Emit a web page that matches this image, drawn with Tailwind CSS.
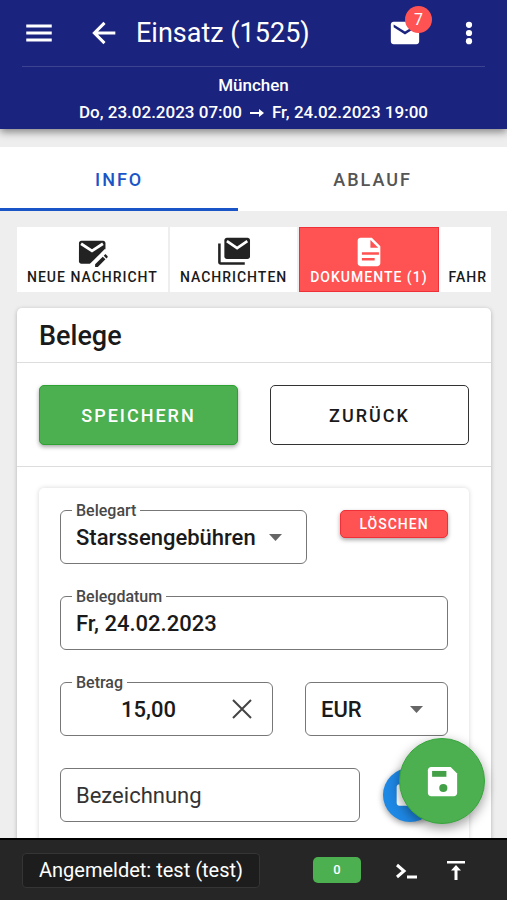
<!DOCTYPE html>
<html lang="de">
<head>
<meta charset="utf-8">
<meta name="viewport" content="width=device-width, initial-scale=1">
<title>Einsatz (1525)</title>
<script src="https://cdn.jsdelivr.net/npm/@tailwindcss/browser@4"></script>
</head>
<body class="bg-[#eeeeee]">
<div class="flex h-screen flex-col overflow-hidden font-[Roboto,sans-serif] text-[#1a1a1a]">

  <header class="relative z-10 bg-[#1a237e] px-[22px] pb-[3px] text-white shadow-[0_3px_8px_rgba(0,0,0,0.45)]">
    <div class="flex h-[67px] items-center border-b border-white/15">
      <button aria-label="Menü" class="size-[34px]"><svg viewBox="0 0 24 24" fill="currentColor"><path d="M3 18h18v-2.200H3V18zm0-4.900h18v-2.200H3v2.200zM3 6v2.200h18V6H3z"/></svg></button>
      <button aria-label="Zurück" class="ml-[31px] size-[34px]"><svg viewBox="0 0 24 24" fill="currentColor"><path d="M20 10.900H7.830l5.300-5.300L11.600 4.100l-7.900 7.900 7.900 7.900 1.500-1.500-5.300-5.300H20z"/></svg></button>
      <h1 class="ml-[15px] flex-1 text-[27px] leading-8">Einsatz (1525)</h1>
      <button aria-label="Nachrichten" class="relative size-[34px]">
        <svg viewBox="0 0 24 24" fill="currentColor"><path d="M20 4H4c-1.100 0-1.990.9-1.990 2L2 18c0 1.100.9 2 2 2h16c1.100 0 2-.9 2-2V6c0-1.100-.9-2-2-2zm0 4l-8 5-8-5V6l8 5 8-5v2z"/></svg>
        <span class="absolute -top-[10px] left-[17px] flex size-[27px] items-center justify-center rounded-full bg-[#ff5252] text-base">7</span>
      </button>
      <button aria-label="Mehr" class="-mr-px ml-[30px] size-[34px]"><svg viewBox="0 0 24 24" fill="currentColor"><circle cx="12" cy="6.200" r="2.200"/><circle cx="12" cy="12" r="2.200"/><circle cx="12" cy="17.800" r="2.200"/></svg></button>
    </div>
    <div class="pt-[5px] text-center text-[17px] leading-[27px] font-medium">
      <p>München</p>
      <p class="flex items-center justify-center gap-2"><span>Do, 23.02.2023 07:00</span><svg class="w-[14px]" viewBox="0 0 14 12" fill="none" stroke="currentColor" stroke-width="2"><path d="M0 6h11"/><path d="M9 2l5 4-5 4z" fill="currentColor" stroke="none"/></svg><span>Fr, 24.02.2023 19:00</span></p>
    </div>
  </header>

  <main class="min-h-0 flex-1 overflow-y-auto pt-[18px] [scrollbar-width:none]">
    <div role="tablist" class="flex h-16 bg-white text-[18px] font-medium tracking-[2px]">
      <button role="tab" aria-selected="true" class="w-[47%] border-b-3 border-[#1a55c8] pt-[3px] text-[#1a55c8]">INFO</button>
      <button role="tab" aria-selected="false" class="flex-1 text-[#555555]">ABLAUF</button>
    </div>

    <nav class="mr-4 ml-[17px] mt-4 flex h-[65px] gap-[2px] overflow-hidden text-[14px] leading-4 font-medium tracking-[1px]">
      <a href="#" class="flex shrink-0 flex-col items-center bg-white px-[10px] pt-2">
        <svg class="size-[34px]" viewBox="0 0 24 24" fill="#222222"><path d="M4.500 4h15.300c1 0 1.700.7 1.700 1.700v6L12.200 20.300H4.500c-1 0-1.700-.7-1.700-1.700V5.700C2.800 4.700 3.500 4 4.500 4z"/><path d="M4.300 6.200l7.700 5 7.700-5" fill="none" stroke="#fff" stroke-width="2"/><path d="M12 22.500l11-11" stroke="#fff" stroke-width="5"/><path d="M14.200 20.700l5.400-5.400 1.900 1.900-5.400 5.400h-1.900zM20.300 14.600l.7-.7c.3-.3.7-.3 1 0l.9.9c.3.3.3.7 0 1l-.7.7z"/></svg>
        <span>NEUE NACHRICHT</span>
      </a>
      <a href="#" class="flex shrink-0 flex-col items-center bg-white px-[10px] pt-2">
        <svg class="size-[34px]" viewBox="0 0 24 24" fill="#222222"><path d="M7 2h14.500c1 0 1.800.8 1.800 1.800v11.400c0 1-.8 1.800-1.800 1.800H7c-1 0-1.800-.8-1.800-1.800V3.800C5.200 2.800 6 2 7 2z"/><path d="M7 4.300l7.200 5 7.200-5" fill="none" stroke="#fff" stroke-width="1.900"/><path d="M.8 6h1.800v13.200h17V21h-17C1.600 21 .8 20.200.8 19.200z"/></svg>
        <span>NACHRICHTEN</span>
      </a>
      <a href="#" class="flex shrink-0 flex-col items-center border border-[#f03038] bg-[#ff5252] px-[10px] pt-[7px] text-white">
        <svg class="size-[34px]" viewBox="0 0 24 24" fill="currentColor"><path d="M14 2H6c-1.100 0-2 .9-2 2v16c0 1.100.9 2 2 2h12c1.100 0 2-.9 2-2V8l-6-6zm2 16H7v-1.800h9V18zm3-4H7v-1.800h12V14zm-6-5V3.500L18.500 9H13z"/></svg>
        <span>DOKUMENTE (1)</span>
      </a>
      <a href="#" class="-ml-[2px] flex flex-1 flex-col items-start bg-white pt-[42px] pl-[10px]">
        <span>FAHR</span>
      </a>
    </nav>

    <section class="mr-4 ml-[17px] mt-4 rounded-[5px] bg-white shadow-[0_1px_4px_rgba(0,0,0,0.25)]">
      <h2 class="border-b border-[#dddddd] px-[22px] pt-3 pb-[10px] text-[27px] leading-8 font-medium">Belege</h2>
      <div class="flex gap-8 border-b border-[#dddddd] px-[22px] pt-[22px] pb-[21px] text-[18px] font-medium tracking-[2px]">
        <button class="h-[60px] flex-1 rounded-[5px] border border-[#2ba232] bg-[#4caf50] text-white shadow-[0_2px_4px_rgba(0,0,0,0.35)]">SPEICHERN</button>
        <button class="h-[60px] flex-1 rounded-[5px] border border-[#333333] bg-white">ZURÜCK</button>
      </div>

      <form class="mx-[22px] mt-[21px] flex flex-col gap-8 rounded-[5px] px-[21px] pt-[22px] pb-12 text-[22px] shadow-[0_0_5px_rgba(0,0,0,0.16)]">
        <div class="flex items-start justify-between">
          <div class="relative">
            <label for="art" class="absolute -top-[9px] left-3 bg-white px-1 text-base leading-5 font-medium text-[#484848]">Belegart</label>
            <select id="art" class="block h-[54px] w-[247px] appearance-none rounded-[6px] border border-[#777777] bg-white pl-[15px] font-medium"><option>Starssengebühren</option></select>
            <svg class="pointer-events-none absolute top-6 right-[25px] h-[7px] w-[13px]" viewBox="0 0 13 7" fill="#666666"><path d="M0 0h13L6.500 7z"/></svg>
          </div>
          <button type="button" class="h-7 w-[108px] rounded-[5px] border border-[#f03038] bg-[#ff5252] text-[14px] font-medium tracking-[1px] text-white shadow-[0_2px_4px_rgba(0,0,0,0.35)]">LÖSCHEN</button>
        </div>
        <div class="relative">
          <label for="datum" class="absolute -top-[9px] left-3 bg-white px-1 text-base leading-5 font-medium text-[#484848]">Belegdatum</label>
          <input id="datum" value="Fr, 24.02.2023" class="block h-[54px] w-full rounded-[6px] border border-[#777777] px-[15px] font-medium">
        </div>
        <div class="flex gap-8">
          <div class="relative flex-1">
            <label for="betrag" class="absolute -top-[9px] left-3 bg-white px-1 text-base leading-5 font-medium text-[#484848]">Betrag</label>
            <input id="betrag" value="15,00" class="block h-[54px] w-full rounded-[6px] border border-[#777777] pr-24 pl-3 text-right font-medium">
            <button type="button" aria-label="Betrag löschen" class="absolute top-[17px] right-[21px] size-5"><svg viewBox="0 0 20 20" stroke="#444444" stroke-width="2"><path d="M1 1l18 18M19 1L1 19"/></svg></button>
          </div>
          <div class="relative">
            <select aria-label="Währung" class="block h-[54px] w-[143px] appearance-none rounded-[6px] border border-[#777777] bg-white pl-[15px] font-medium"><option>EUR</option></select>
            <svg class="pointer-events-none absolute top-6 right-[25px] h-[7px] w-[13px]" viewBox="0 0 13 7" fill="#666666"><path d="M0 0h13L6.500 7z"/></svg>
          </div>
        </div>
        <div class="flex items-start gap-[23px]">
          <input aria-label="Bezeichnung" placeholder="Bezeichnung" class="block h-[54px] w-[300px] rounded-[6px] border border-[#777777] px-[15px] placeholder:text-[#333333]">
          <button type="button" aria-label="Foto" class="flex size-[54px] shrink-0 items-center justify-center rounded-full bg-[#1e88e5] text-white shadow-[0_2px_6px_rgba(0,0,0,0.4)]"><svg class="size-8" viewBox="0 0 24 24" fill="currentColor"><path d="M4 4h16c1.100 0 2 .9 2 2v12c0 1.100-.9 2-2 2H4c-1.100 0-2-.9-2-2V6c0-1.100.9-2 2-2z"/></svg></button>
        </div>
      </form>
    </section>
  </main>

  <button aria-label="Speichern" class="fixed right-[22px] bottom-[76px] z-10 flex size-[86px] items-center justify-center rounded-full border border-[#35a53a] bg-[#4caf50] text-white shadow-[0_4px_12px_rgba(0,0,0,0.4)]"><svg class="size-[39px]" viewBox="0 0 24 24"><path fill="currentColor" d="M17 3H5c-1.110 0-2 .9-2 2v14c0 1.100.89 2 2 2h14c1.100 0 2-.9 2-2V7l-4-4z"/><path fill="#43a047" d="M5.600 5.500h8.800v3.600H5.600z"/><circle cx="12.500" cy="16" r="2.500" fill="#43a047"/></svg></button>

  <footer class="relative flex h-[62px] shrink-0 items-center border-t-2 border-black bg-[#262626] pr-[35px] pl-[22px] text-white">
    <span class="rounded-[4px] border border-[#353535] bg-[#1d1d1d] px-4 text-[20px] leading-[33px]">Angemeldet: test (test)</span>
    <span class="mr-[29px] ml-auto flex h-[26px] w-12 items-center justify-center rounded-[5px] bg-[#4caf50] text-[13px] font-medium">0</span>
    <button aria-label="Konsole" class="mr-[18px] size-8"><svg viewBox="0 0 32 32" fill="none" stroke="currentColor" stroke-width="3"><path d="M7 11l7 6-7 6M17 23h10"/></svg></button>
    <button aria-label="Nach oben" class="size-8"><svg viewBox="0 0 32 32" fill="currentColor"><path d="M7 7h18v2.500H7zM16 11l5 5.500h-3.500V26h-3v-9.500H11z"/></svg></button>
  </footer>
</div>
</body>
</html>
